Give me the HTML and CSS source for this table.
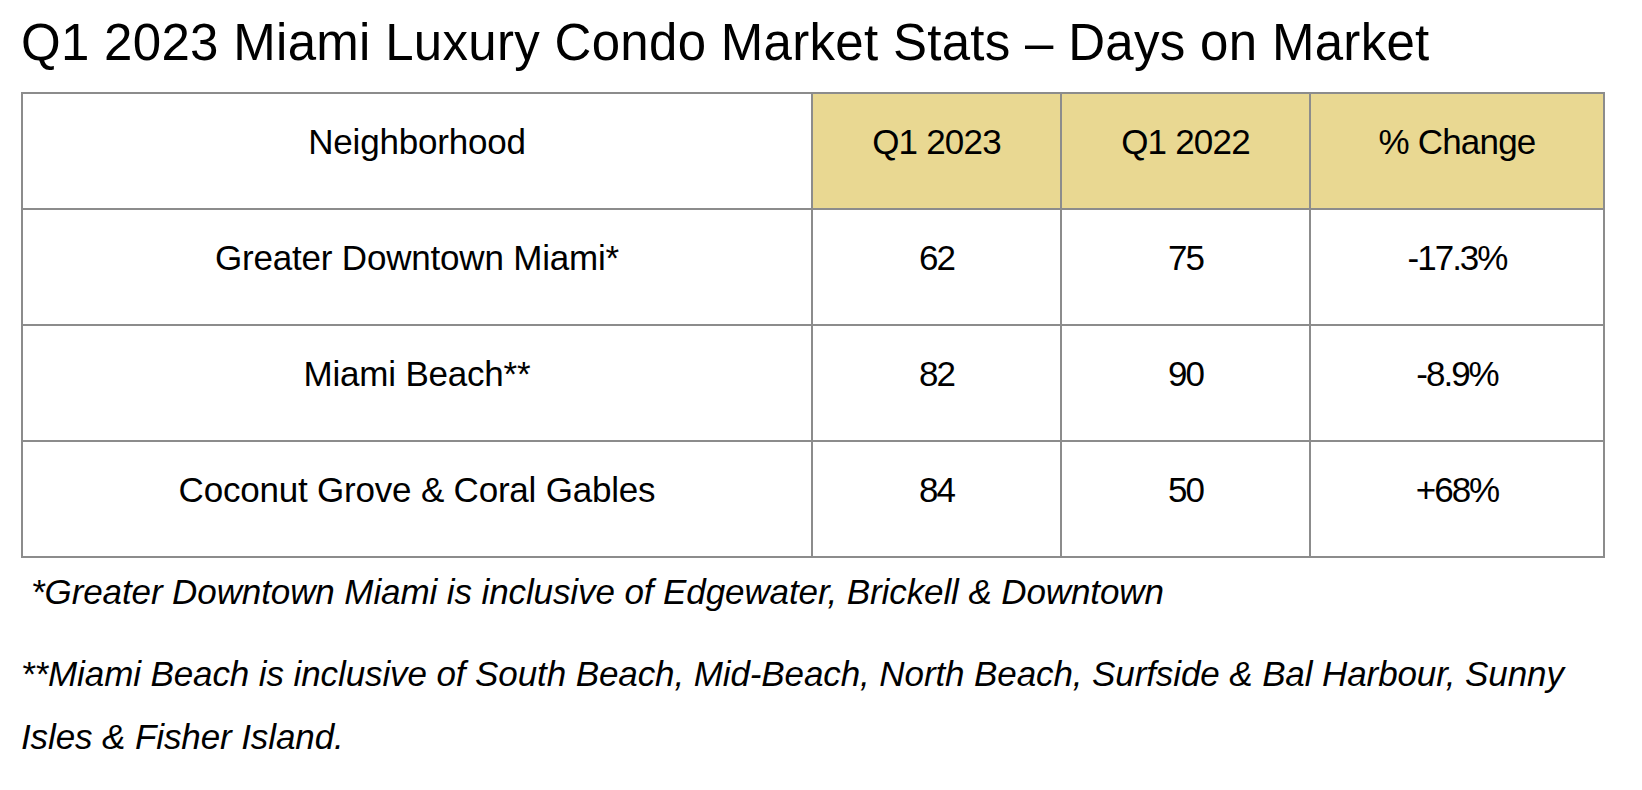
FILE: index.html
```html
<!DOCTYPE html>
<html lang="en">
<head>
<meta charset="utf-8">
<title>Q1 2023 Miami Luxury Condo Market Stats – Days on Market</title>
<link rel="stylesheet" href="styles.css">
</head>
<body>
<main class="page">
  <h1 class="title">Q1 2023 Miami Luxury Condo Market Stats – Days on Market</h1>
  <table class="stats">
    <colgroup>
      <col class="col-name">
      <col class="col-num">
      <col class="col-num">
      <col class="col-pct">
    </colgroup>
    <thead>
      <tr>
        <th class="plain">Neighborhood</th>
        <th class="gold">Q1 2023</th>
        <th class="gold">Q1 2022</th>
        <th class="gold">% Change</th>
      </tr>
    </thead>
    <tbody>
      <tr>
        <td>Greater Downtown Miami*</td>
        <td class="num">62</td>
        <td class="num">75</td>
        <td class="num">-17.3%</td>
      </tr>
      <tr>
        <td>Miami Beach**</td>
        <td class="num">82</td>
        <td class="num">90</td>
        <td class="num">-8.9%</td>
      </tr>
      <tr>
        <td>Coconut Grove &amp; Coral Gables</td>
        <td class="num">84</td>
        <td class="num">50</td>
        <td class="num">+68%</td>
      </tr>
    </tbody>
  </table>
  <p class="note note-first">*Greater Downtown Miami is inclusive of Edgewater, Brickell &amp; Downtown</p>
  <p class="note">**Miami Beach is inclusive of South Beach, Mid-Beach, North Beach, Surfside &amp; Bal Harbour, Sunny Isles &amp; Fisher Island.</p>
</main>
</body>
</html>
```
FILE: styles.css
```css
html, body {
  margin: 0;
  padding: 0;
  background: #ffffff;
}

.page {
  padding: 14px 0 0 21px;
  width: 1582px;
  font-family: "Liberation Sans", Arial, sans-serif;
  color: #000000;
}

.title {
  margin: 0 0 20px 0;
  font-size: 51px;
  font-weight: 400;
  line-height: 58px;
  letter-spacing: 0.3px;
  white-space: nowrap;
}

.stats {
  width: 1582px;
  border-collapse: collapse;
  table-layout: fixed;
}

.col-name { width: 790px; }
.col-num { width: 249px; }
.col-pct { width: 294px; }

.stats th,
.stats td {
  border: 2px solid #8c8c8c;
  padding: 31px 0 49px 0;
  text-align: center;
  vertical-align: top;
  font-size: 35px;
  font-weight: 400;
  line-height: 34px;
  letter-spacing: -0.2px;
}

.stats th.gold {
  background: #e9d892;
  letter-spacing: -0.8px;
}

.stats td.num {
  letter-spacing: -2px;
}

.note {
  margin: 0;
  font-size: 35px;
  font-style: italic;
  line-height: 63px;
  letter-spacing: -0.1px;
}

.note-first {
  padding-left: 10px;
  margin-top: 2px;
  margin-bottom: 19px;
}
```
